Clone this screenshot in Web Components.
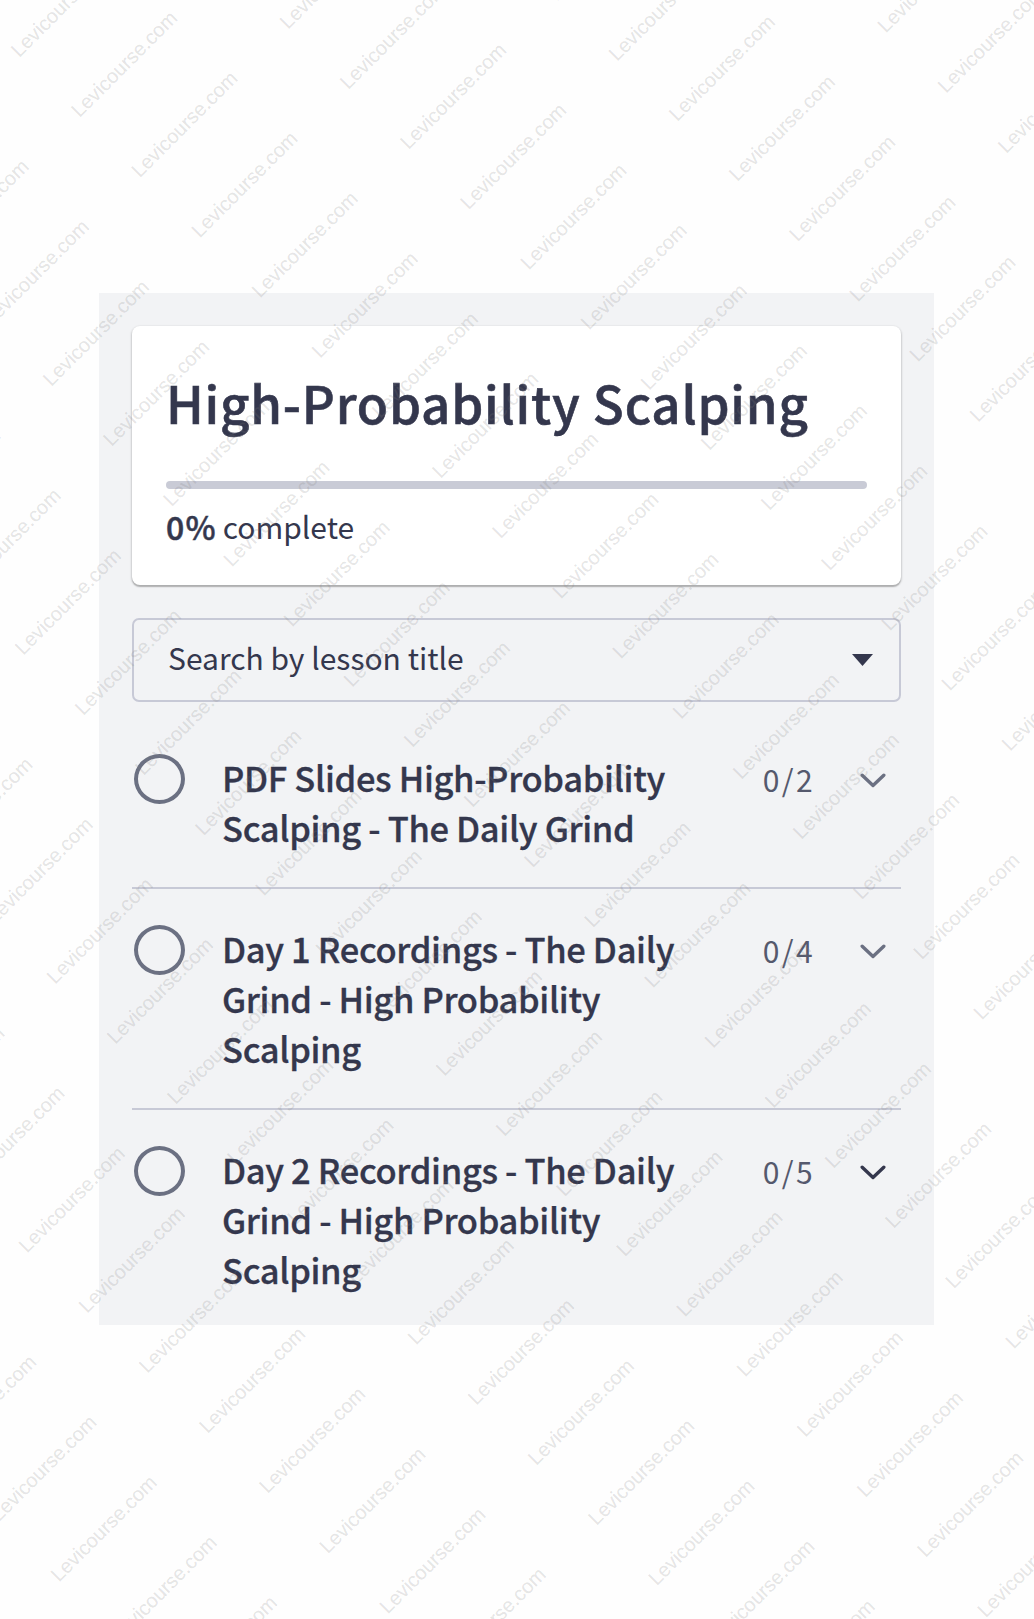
<!DOCTYPE html>
<html lang="en">
<head>
<meta charset="utf-8">
<title>High-Probability Scalping</title>
<style>
  body {
    margin: 0;
    background: #fefefe;
    color: #34374d;
    font-family: "Noto Sans CJK SC", "Open Sans", sans-serif;
  }
</style>
</head>
<body>
<course-page>
  <course-card percent="0">High-Probability Scalping</course-card>
  <lesson-search>Search by lesson title</lesson-search>
  <lesson-row count="0/2">PDF Slides High-Probability Scalping - The Daily Grind</lesson-row>
  <lesson-row count="0/4">Day 1 Recordings - The Daily Grind - High Probability Scalping</lesson-row>
  <lesson-row count="0/5" active>Day 2 Recordings - The Daily Grind - High Probability Scalping</lesson-row>
</course-page>
<water-mark text="Levicourse.com"></water-mark>

<script>
class CoursePage extends HTMLElement {
  constructor() {
    super();
    this.attachShadow({ mode: "open" }).innerHTML = `
      <style>
        :host {
          display: block;
          box-sizing: border-box;
          height: 1619px;
          padding: 293px 100px 0 99px;
        }

        .panel {
          box-sizing: border-box;
          height: 1032px;
          padding: 33px 33px 0;
          background: #f2f3f5;
        }
      </style>
      <div class="panel"><slot></slot></div>
    `;
  }
}

class CourseCard extends HTMLElement {
  constructor() {
    super();
    this.attachShadow({ mode: "open" });
  }

  connectedCallback() {
    const percent = Number(this.getAttribute("percent") || 0);

    this.shadowRoot.innerHTML = `
      <style>
        :host {
          display: block;
          box-sizing: border-box;
          height: 259px;
          padding: 38px 34px 0;
          background: #fff;
          border-radius: 8px;
          box-shadow: 0 1px 2px 1px rgba(0, 0, 0, 0.14), 0 2px 1px rgba(0, 0, 0, 0.17);
        }

        h1 {
          margin: 0 0 41px;
          font-size: 51px;
          font-weight: 500;
          line-height: 76px;
          letter-spacing: 0.8px;
          white-space: nowrap;
          -webkit-text-stroke: 0.6px;
        }

        .bar {
          height: 8px;
          border-radius: 4px;
          background: #c9cbd6;
        }

        .fill {
          width: ${percent}%;
          height: 100%;
          border-radius: 4px;
          background: #34374d;
        }

        .status {
          display: flex;
          gap: 6px;
          margin-top: 14px;
          font-size: 30px;
          line-height: 46px;
        }

        b {
          font-size: 32px;
          font-weight: 500;
          letter-spacing: 1.2px;
          -webkit-text-stroke: 0.5px;
        }
      </style>
      <h1><slot></slot></h1>
      <div class="bar"><div class="fill"></div></div>
      <div class="status"><b>${percent}%</b> <span>complete</span></div>
    `;
  }
}

class LessonSearch extends HTMLElement {
  constructor() {
    super();
    this.attachShadow({ mode: "open" }).innerHTML = `
      <style>
        :host {
          display: flex;
          align-items: center;
          justify-content: space-between;
          box-sizing: border-box;
          height: 84px;
          margin: 33px 0 16px;
          padding: 0 26px 0 34px;
          border: 2px solid #c7c9d6;
          border-radius: 7px;
          font-size: 30px;
          line-height: 46px;
        }

        .label {
          padding-bottom: 6px;
        }

        svg {
          display: block;
        }
      </style>
      <span class="label"><slot></slot></span>
      <svg width="21" height="12" viewBox="0 0 21 12"><path d="M0 0h21L10.5 12z" fill="#34374d"/></svg>
    `;
  }
}

class LessonRow extends HTMLElement {
  constructor() {
    super();
    this.attachShadow({ mode: "open" });
  }

  connectedCallback() {
    const stroke = this.hasAttribute("active") ? "#34374d" : "#6b7082";

    this.shadowRoot.innerHTML = `
      <style>
        :host {
          display: flex;
          align-items: flex-start;
          padding: 34px 15px 35px 2px;
          border-bottom: 2px solid #c7c9d6;
        }

        :host(:last-of-type) {
          border-bottom: 0;
        }

        .ring {
          flex: none;
          box-sizing: border-box;
          width: 51px;
          height: 50px;
          margin-top: 2px;
          border: 4px solid #6b7082;
          border-radius: 50%;
        }

        .title {
          width: 470px;
          margin-left: 37px;
          font-size: 34.5px;
          font-weight: 500;
          line-height: 50px;
          letter-spacing: -0.35px;
          -webkit-text-stroke: 0.3px;
        }

        .count {
          margin-left: auto;
          color: #55596d;
          font-size: 30px;
          line-height: 54px;
          letter-spacing: 2.4px;
        }

        svg {
          flex: none;
          margin: 21px 0 0 45px;
        }
      </style>
      <div class="ring"></div>
      <div class="title"><slot></slot></div>
      <div class="count">${this.getAttribute("count")}</div>
      <svg width="26" height="16" viewBox="0 0 26 16" fill="none" stroke="${stroke}"
        stroke-width="3.4" stroke-linecap="round" stroke-linejoin="round">
        <path d="M2.2 2.2 13 12.4 23.8 2.2"/>
      </svg>
    `;
  }
}

// Diagonal text repeated over the whole page
class WaterMark extends HTMLElement {
  constructor() {
    super();
    this.attachShadow({ mode: "open" });
  }

  connectedCallback() {
    const text = this.getAttribute("text");
    const width = 1034;
    const height = 1619;
    const across = 60.16;
    const along = 148.49;

    let marks = "";
    for (let j = -8; j <= 8; j++) {
      for (let i = -20; i <= 30; i++) {
        const x = 80.5 + i * across + j * along;
        const y = 117.3 + i * across - j * along;
        if (x < -98 || x > width || y < 0 || y > height + 98) continue;
        marks += `<text transform="translate(${x.toFixed(1)} ${y.toFixed(1)}) rotate(-45)" x="-1.5">${text}</text>`;
      }
    }

    this.shadowRoot.innerHTML = `
      <style>
        :host {
          display: block;
          position: absolute;
          inset: 0;
          height: ${height}px;
          overflow: hidden;
          pointer-events: none;
        }

        svg {
          display: block;
        }

        text {
          font: 20px "Liberation Sans", Arial, sans-serif;
          fill: rgba(128, 128, 128, 0.2);
          stroke: rgba(128, 128, 128, 0.05);
          stroke-width: 0.6px;
        }
      </style>
      <svg width="${width}" height="${height}">${marks}</svg>
    `;
  }
}

customElements.define("course-page", CoursePage);
customElements.define("course-card", CourseCard);
customElements.define("lesson-search", LessonSearch);
customElements.define("lesson-row", LessonRow);
customElements.define("water-mark", WaterMark);
</script>
</body>
</html>
